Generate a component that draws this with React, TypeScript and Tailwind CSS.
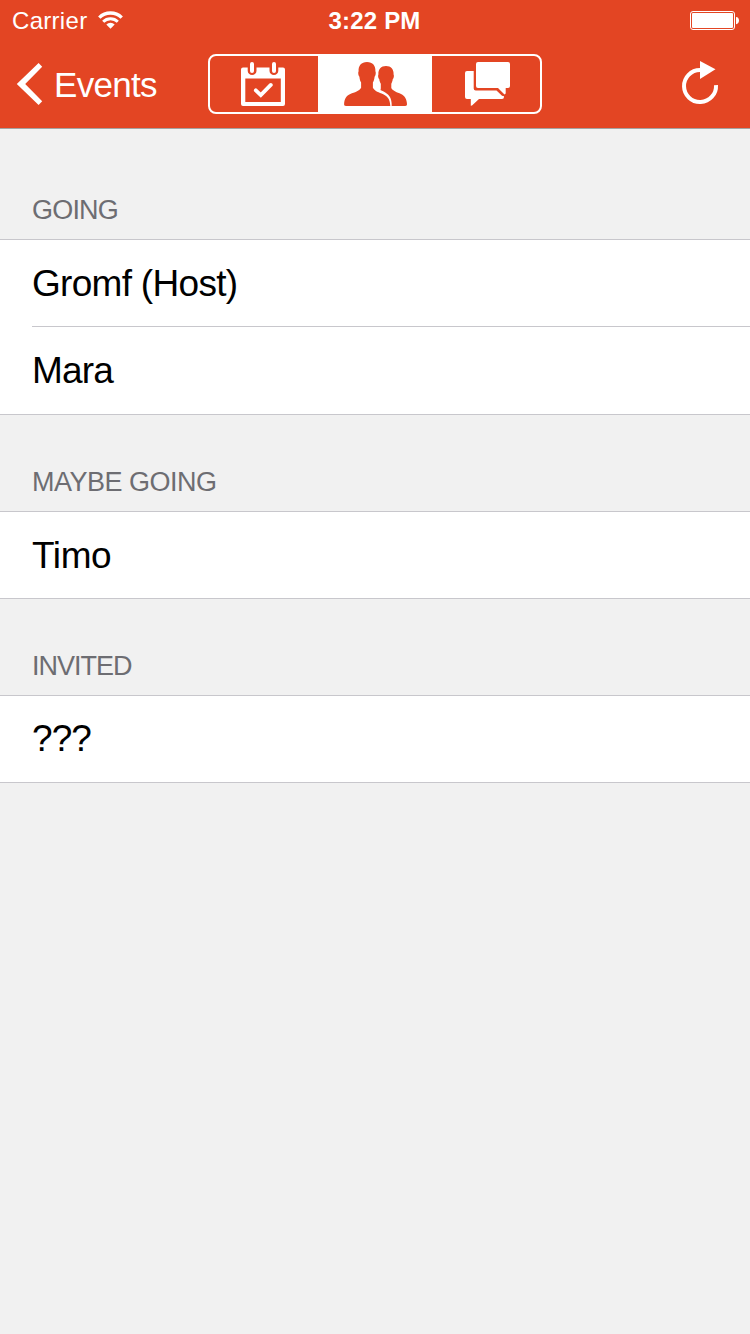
import type { ReactNode } from "react";

function StatusBar() {
  return (
    <div className="grid h-10 grid-cols-3 items-center pl-[12px] pr-[11px]">
      <div className="flex h-10 items-center gap-[11px]">
        <span className="h-10 text-[24px] leading-[42px] tracking-[0.3px]">Carrier</span>
        <svg className="h-[18px] w-[25px]" viewBox="98 11 25 18" fill="none" stroke="currentColor">
          <path d="M99.300 17.600a15.900 15.900 0 0 1 22.400 0" strokeWidth="3.400" />
          <path d="M103.200 21.700a10.400 10.400 0 0 1 14.600 0" strokeWidth="3" />
          <path d="M106.300 24.400a6 6 0 0 1 8.400 0L110.500 28.800z" fill="currentColor" stroke="none" />
        </svg>
      </div>
      <span className="-ml-0.5 h-10 text-center text-[24px] font-bold leading-[42px] tracking-[0.2px]">3:22 PM</span>
      <svg className="h-[19px] w-[49px] justify-self-end" viewBox="690 11 49 19" fill="currentColor">
        <rect x="690.5" y="11.5" width="44" height="18" rx="2.5" fill="none" stroke="currentColor" />
        <rect x="692" y="13" width="41" height="15" rx="1" />
        <path d="M736 17c2 0 3 1.8 3 3.6s-1 3.6-3 3.6z" />
      </svg>
    </div>
  );
}

function CalendarIcon() {
  return (
    <svg className="h-14 w-[108px]" viewBox="210 56 108 56">
      <path
        fill="currentColor"
        fillRule="evenodd"
        d="M243 67.500h4.700v3.200a4.400 4.400 0 0 0 8.800 0v-3.200h13v3.200a4.400 4.400 0 0 0 8.800 0v-3.200h4.700a2 2 0 0 1 2 2v34.500a2 2 0 0 1-2 2H243a2 2 0 0 1-2-2V69.500a2 2 0 0 1 2-2zM245.300 78.500v23.500h35.500v-23.500z"
      />
      <rect x="250" y="62" width="4" height="11" rx="2" fill="currentColor" />
      <rect x="272" y="62" width="4" height="11" rx="2" fill="currentColor" />
      <path d="M255.800 90.300l5 4.800 10-10.200" fill="none" stroke="currentColor" strokeWidth="3.8" strokeLinecap="round" />
    </svg>
  );
}

function PeopleIcon() {
  return (
    <svg className="h-14 w-[114px]" viewBox="318 56 114 56" fill="currentColor">
      <path d="M386 66c5 0 7.900 3.300 7.600 8.400.6.700.3 3.700-.8 4.700-.3 2-.8 3.400-1.500 4.600v4.300c1.800 3.300 5.700 4.200 9.700 6 4 1.900 5.700 5.500 6 10 .1 1.300-.5 2-1.800 2h-13.500c.2-5.500-1.200-9.800-4.700-12.300-2.300-1.600-4.500-2.600-6.600-3.600.3-.7.400-1.400.4-2.200v-4.200c-.8-1.200-1.300-2.600-1.600-4.600-1.100-1-1.400-4-.8-4.700-.3-5.100 2.600-8.400 7.600-8.400z" />
      <path d="M367 62c5.700 0 8.800 3.700 8.400 9.300.7.800.4 4.500-.8 5.500-.3 2.400-.7 4.300-1.700 5.700v5.300c2 3.600 6.100 4.600 10.300 6.500 5 2.300 6.900 6 7.100 11.700H346c-1.500 0-2-.8-1.900-2 .3-5 2.200-8.500 6.200-10 4.500-1.700 8.700-2.600 10.800-6.200v-5.300c-1-1.400-1.400-3.300-1.700-5.700-1.200-1-1.500-4.700-.8-5.500-.4-5.600 2.700-9.300 8.400-9.300z" />
    </svg>
  );
}

function ChatIcon() {
  return (
    <svg className="h-14 w-[108px]" viewBox="432 56 108 56" fill="currentColor">
      <path d="M467 71h6.700v17.500a2 2 0 0 0 2 2h20.800l5.500 5.300 2 .5V97a2 2 0 0 1-2 2H479l-7 6.500-1.200.3V99H467a2 2 0 0 1-2-2V73a2 2 0 0 1 2-2z" />
      <path d="M478 62h30a2 2 0 0 1 2 2v22a2 2 0 0 1-2 2h-2.300v5.500l-1.200 1L498 88h-20a2 2 0 0 1-2-2V64a2 2 0 0 1 2-2z" />
    </svg>
  );
}

function NavBar() {
  return (
    <div className="flex h-[88px] items-start">
      <a className="flex w-[208px] items-center pl-4 pt-[21px]">
        <svg className="h-[46px] w-[27px]" viewBox="16 61 27 46" fill="currentColor">
          <path d="M38.600 63L42.200 66.700 25.200 84 42.200 101.300 38.600 105 16.800 84z" />
        </svg>
        <span className="h-[46px] pl-[11px] text-[35px] leading-[48px] tracking-[-0.7px]">Events</span>
      </a>
      <div className="mt-[14px] flex h-[60px] w-[334px] overflow-hidden rounded-[8px] border-2 border-white">
        <button className="w-[108px]"><CalendarIcon /></button>
        <button className="w-[114px] bg-white text-[#e34523]"><PeopleIcon /></button>
        <button className="w-[108px]"><ChatIcon /></button>
      </div>
      <button className="ml-auto mr-[30px] mt-[20px]">
        <svg className="h-[46px] w-[40px]" viewBox="680 60 40 46">
          <path d="M716 85A16 16 0 1 1 700 70" fill="none" stroke="currentColor" strokeWidth="4" />
          <path d="M700 61l15.500 8.200L700 79z" fill="currentColor" />
        </svg>
      </button>
    </div>
  );
}

function SectionTitle({ className, children }: { className: string; children: ReactNode }) {
  return (
    <h2 className={`flex items-end pb-[14px] pl-8 text-[27px] leading-[30px] text-[#6d6d72] ${className}`}>
      {children}
    </h2>
  );
}

function Name({ className, children }: { className: string; children: ReactNode }) {
  return <div className={`text-[37px] ${className}`}>{children}</div>;
}

export default function App() {
  return (
    <div className="min-h-[1334px] w-[750px] bg-[#f1f1f1] font-['Liberation_Sans',Arial,sans-serif] text-black">
      <header className="h-[129px] border-b border-[#a5a2a1] bg-[#e34523] text-white">
        <StatusBar />
        <NavBar />
      </header>

      <SectionTitle className="h-[110px] tracking-[-0.8px]">GOING</SectionTitle>
      <div className="border-y border-[#c8c7cc] bg-white pl-8">
        <Name className="h-[87px] border-b border-[#c8c7cc] leading-[87px] tracking-[-0.7px]">Gromf (Host)</Name>
        <Name className="h-[87px] leading-[88px] tracking-[-0.8px]">Mara</Name>
      </div>

      <SectionTitle className="h-[96px] tracking-[-0.5px]">MAYBE GOING</SectionTitle>
      <div className="border-y border-[#c8c7cc] bg-white pl-8">
        <Name className="h-[86px] leading-[87px] tracking-[-0.4px]">Timo</Name>
      </div>

      <SectionTitle className="h-[96px] tracking-[-1px]">INVITED</SectionTitle>
      <div className="border-y border-[#c8c7cc] bg-white pl-8">
        <Name className="h-[86px] leading-[86px] tracking-[-0.9px]">???</Name>
      </div>
    </div>
  );
}
